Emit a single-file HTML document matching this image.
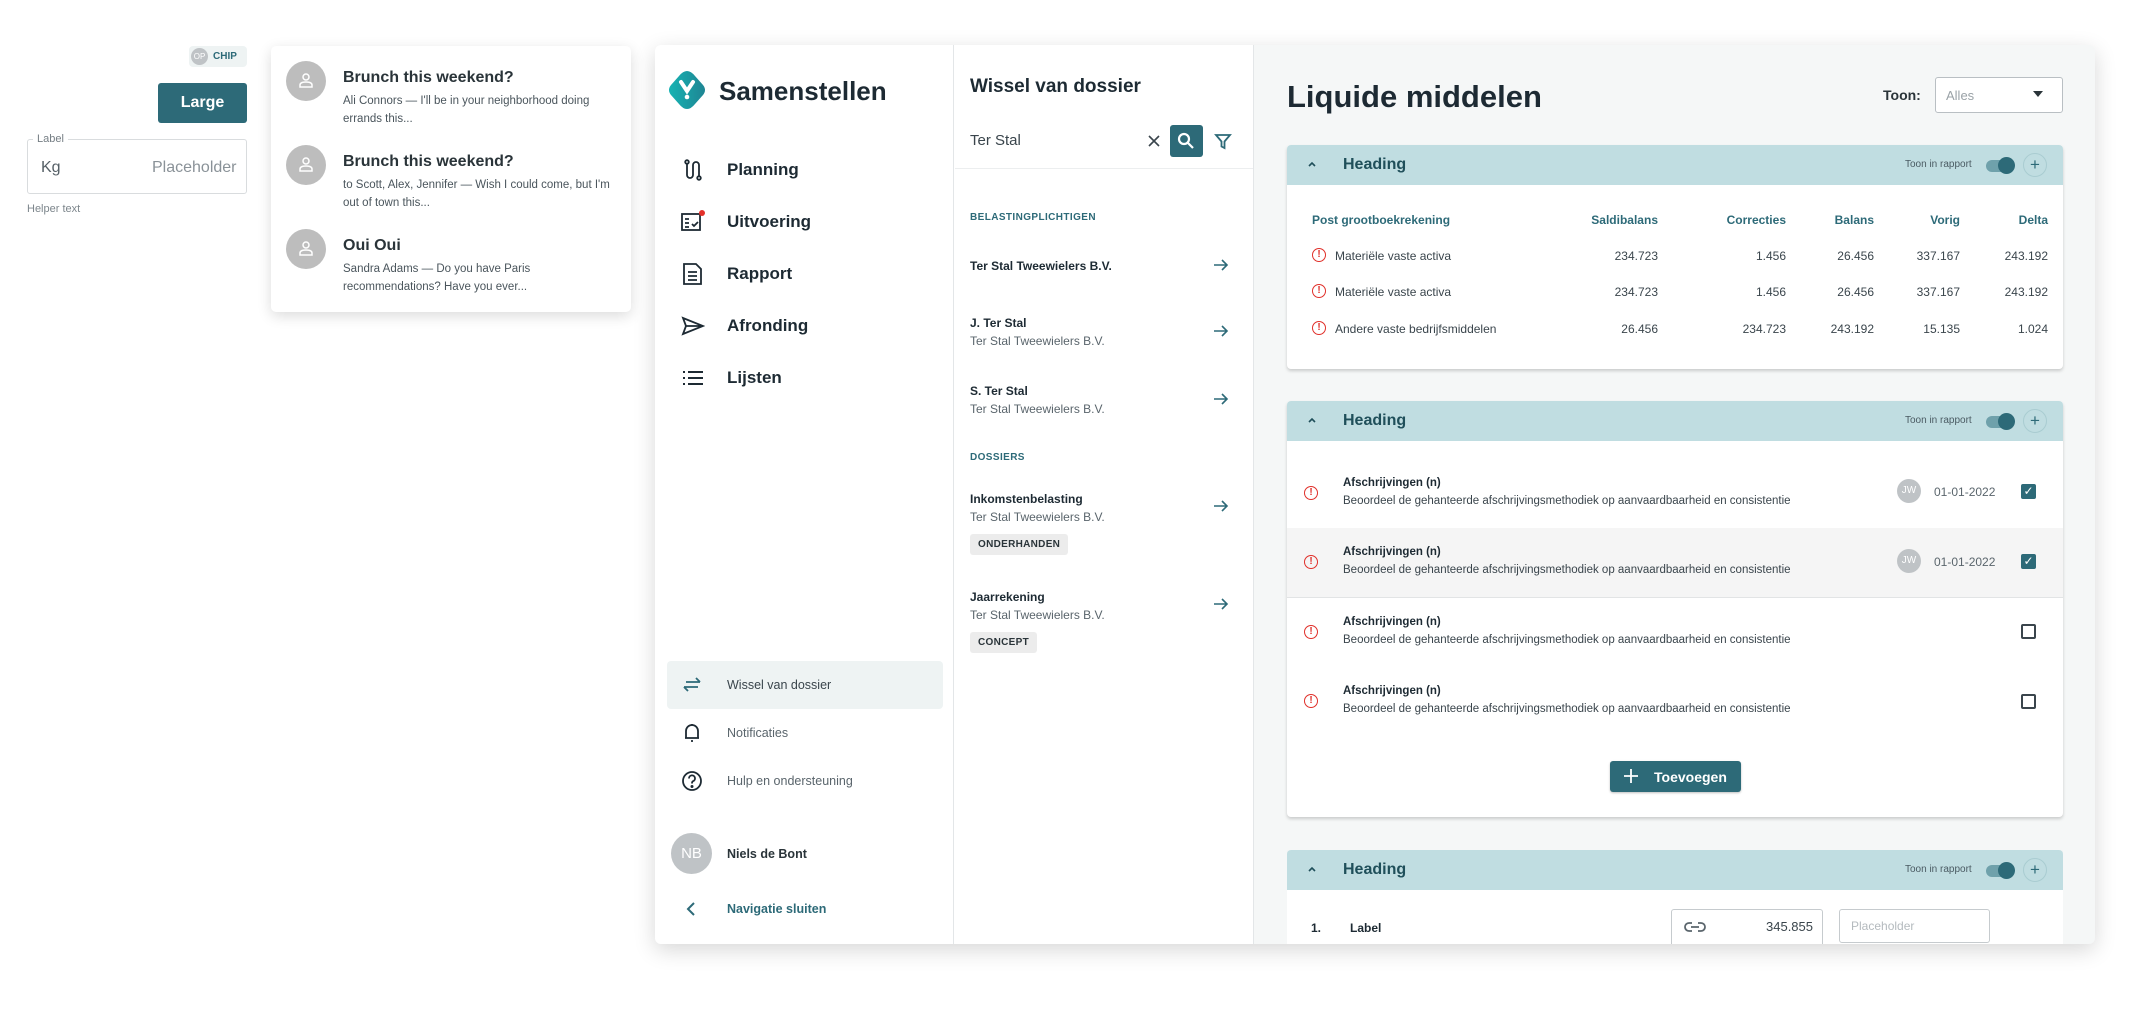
<!DOCTYPE html>
<html><head><meta charset="utf-8"><style>
*{box-sizing:border-box;margin:0;padding:0}
body{width:2149px;height:1010px;background:#fff;font-family:"Liberation Sans",sans-serif;color:#1d2a33;position:relative;overflow:hidden}
.a{position:absolute}
.t{position:absolute;white-space:nowrap}
.card{background:#fff;border-radius:4px;box-shadow:0 2px 3px rgba(0,0,0,.18)}
.hd{position:absolute;left:0;right:0;top:0;height:40px;background:#c0dde1;border-radius:4px 4px 0 0}
.hd .h{position:absolute;left:56px;top:11px;font-size:16px;font-weight:bold;color:#1f4f5a}
.hd svg{position:absolute;left:19px;top:15px}
.hd .tr{position:absolute;left:618px;top:14px;font-size:10px;color:#4a5a62}
.hd .trk{position:absolute;left:699px;top:15px;width:24px;height:12px;border-radius:6px;background:#6fa1ab}
.hd .knb{position:absolute;left:711px;top:12px;width:17px;height:17px;border-radius:50%;background:#2d6a78}
.hd .pl{position:absolute;left:736px;top:8px;width:24px;height:24px;border-radius:50%;border:1px solid #a9ccd1;color:#2d6a78;font-size:17px;text-align:center;line-height:21px}
.th{font-size:12px;color:#2d6a78;font-weight:bold}
.td{font-size:12px;color:#3a454c}
.err{position:absolute;width:14px;height:14px;border:1.5px solid #e0302a;border-radius:50%;color:#e0302a;font-size:10px;font-weight:bold;text-align:center;line-height:11px}
.nav{font-size:17px;font-weight:bold;color:#1d2a33}
.it1{font-size:12px;font-weight:bold;color:#1d2a33}
.it2{font-size:12px;color:#5a656c}
.arr{position:absolute;left:1213px}
.chipg{position:absolute;background:#ececec;border-radius:3px;font-size:10px;font-weight:bold;color:#2a3439;padding:0 8px;line-height:21px;letter-spacing:.3px}
.cb{position:absolute;left:2021px;width:15px;height:15px;border:2px solid #3a454c;border-radius:2px}
.cbo{background:#2d6a78;border-color:#2d6a78;color:#fff;font-size:12px;line-height:11px;text-align:center}
</style></head><body>

<div class="a" style="left:189px;top:46px;width:58px;height:21px;background:#eef3f3;border-radius:4px"></div>
<div class="a" style="left:191px;top:48px;width:17px;height:17px;border-radius:50%;background:#bfc3c6;color:#fff;font-size:8px;text-align:center;line-height:17px">OP</div>
<div class="t" style="left:213px;top:51px;font-size:10px;font-weight:bold;color:#2d6a78">CHIP</div>
<div class="a" style="left:158px;top:83px;width:89px;height:40px;background:#2d6a78;border-radius:3px;color:#fff;font-size:16px;font-weight:bold;text-align:center;line-height:40px">Large</div>
<div class="a" style="left:27px;top:139px;width:220px;height:55px;border:1px solid #d9dcde;border-radius:3px"></div>
<div class="t" style="left:33px;top:133px;background:#fff;padding:0 4px;font-size:11px;color:#757e84">Label</div>
<div class="t" style="left:41px;top:159px;font-size:16px;color:#555f66">Kg</div>
<div class="t" style="left:152px;top:159px;font-size:16px;color:#8a9298">Placeholder</div>
<div class="t" style="left:27px;top:203px;font-size:11px;color:#7d868c">Helper text</div>

<div class="a" style="left:271px;top:46px;width:360px;height:266px;background:#fff;border-radius:5px;box-shadow:0 4px 14px rgba(0,0,0,.14)"></div>
<div class="a" style="left:286px;top:61px;width:40px;height:40px;border-radius:50%;background:#bdbdbd"></div>
<div class="a" style="left:286px;top:145px;width:40px;height:40px;border-radius:50%;background:#bdbdbd"></div>
<div class="a" style="left:286px;top:229px;width:40px;height:40px;border-radius:50%;background:#bdbdbd"></div>
<svg class="a" style="left:296px;top:71px" width="20" height="20" viewBox="0 0 20 20"><circle cx="10" cy="6" r="3" fill="none" stroke="#fff" stroke-width="1.5"/><path d="M4 16v-2q0-3 6-3t6 3v2z" fill="none" stroke="#fff" stroke-width="1.5"/></svg>
<svg class="a" style="left:296px;top:155px" width="20" height="20" viewBox="0 0 20 20"><circle cx="10" cy="6" r="3" fill="none" stroke="#fff" stroke-width="1.5"/><path d="M4 16v-2q0-3 6-3t6 3v2z" fill="none" stroke="#fff" stroke-width="1.5"/></svg>
<svg class="a" style="left:296px;top:239px" width="20" height="20" viewBox="0 0 20 20"><circle cx="10" cy="6" r="3" fill="none" stroke="#fff" stroke-width="1.5"/><path d="M4 16v-2q0-3 6-3t6 3v2z" fill="none" stroke="#fff" stroke-width="1.5"/></svg>
<div class="t" style="left:343px;top:69px;font-size:16px;font-weight:bold;color:#2a3439">Brunch this weekend?</div>
<div class="t" style="left:343px;top:92px;font-size:11.5px;line-height:18px;color:#4a555c;white-space:normal;width:255px">Ali Connors — I'll be in your neighborhood doing errands this...</div>
<div class="t" style="left:343px;top:153px;font-size:16px;font-weight:bold;color:#2a3439">Brunch this weekend?</div>
<div class="t" style="left:343px;top:176px;font-size:11.5px;line-height:18px;color:#4a555c;white-space:normal;width:280px">to Scott, Alex, Jennifer — Wish I could come, but I'm out of town this...</div>
<div class="t" style="left:343px;top:237px;font-size:16px;font-weight:bold;color:#2a3439">Oui Oui</div>
<div class="t" style="left:343px;top:260px;font-size:11.5px;line-height:18px;color:#4a555c;white-space:normal;width:245px">Sandra Adams — Do you have Paris recommendations? Have you ever...</div>

<div class="a" style="left:655px;top:45px;width:1440px;height:899px;background:#f5f7f7;border-radius:6px;box-shadow:0 6px 22px rgba(0,0,0,.16);overflow:hidden">
  <div class="a" style="left:0;top:0;width:299px;height:899px;background:#fff;border-right:1px solid #e3e6e8"></div>
  <div class="a" style="left:299px;top:0;width:300px;height:899px;background:#fff;border-right:1px solid #e3e6e8"></div>
</div>

<svg class="a" style="left:666px;top:69px" width="42" height="42" viewBox="0 0 42 42"><defs><linearGradient id="g" x1="0" x2="1"><stop offset="0" stop-color="#17b3b3"/><stop offset="1" stop-color="#1e8593"/></linearGradient></defs><path d="M21 2Q25 2 29 7L37 16Q41 21 37 26L29 35Q25 40 21 40Q17 40 13 35L5 26Q1 21 5 16L13 7Q17 2 21 2Z" fill="url(#g)"/><path d="M15 13L21 22L27 13" fill="none" stroke="#fff" stroke-width="4" stroke-linecap="round"/><circle cx="21" cy="28" r="2.3" fill="#fff"/></svg>
<div class="t" style="left:719px;top:76px;font-size:26px;font-weight:bold;color:#1d2a33">Samenstellen</div>

<svg class="a" style="left:681px;top:158px" width="24" height="24" viewBox="0 0 24 24" fill="none" stroke="#1d2a33" stroke-width="1.8"><circle cx="6" cy="4" r="1.8"/><path d="M6 6v11a3 3 0 0 0 6 0V7a3 3 0 0 1 6 0v11"/><circle cx="18" cy="20" r="1.8"/></svg>
<div class="t nav" style="left:727px;top:160px">Planning</div>
<svg class="a" style="left:681px;top:210px" width="26" height="24" viewBox="0 0 26 24" fill="none" stroke="#1d2a33" stroke-width="1.8"><rect x="1" y="4" width="18" height="16"/><path d="M4 9h4M4 13h4M4 17h4M11 14l2 2 4-4"/><circle cx="21" cy="3" r="3" fill="#e3302a" stroke="none"/></svg>
<div class="t nav" style="left:727px;top:212px">Uitvoering</div>
<svg class="a" style="left:681px;top:262px" width="24" height="24" viewBox="0 0 24 24" fill="none" stroke="#1d2a33" stroke-width="1.8"><path d="M3 2h12l5 5v15H3z"/><path d="M7 10h9M7 14h9M7 18h9"/></svg>
<div class="t nav" style="left:727px;top:264px">Rapport</div>
<svg class="a" style="left:681px;top:314px" width="24" height="24" viewBox="0 0 24 24" fill="none" stroke="#1d2a33" stroke-width="1.8"><path d="M2 4l20 8-20 8 3-8z M5 12h17"/></svg>
<div class="t nav" style="left:727px;top:316px">Afronding</div>
<svg class="a" style="left:681px;top:366px" width="24" height="24" viewBox="0 0 24 24" fill="none" stroke="#1d2a33" stroke-width="2"><path d="M2 6h2M2 12h2M2 18h2M7 6h15M7 12h15M7 18h15"/></svg>
<div class="t nav" style="left:727px;top:368px">Lijsten</div>

<div class="a" style="left:667px;top:661px;width:276px;height:48px;background:#eef3f3;border-radius:4px"></div>
<svg class="a" style="left:681px;top:674px" width="22" height="22" viewBox="0 0 22 22" fill="none" stroke="#2d6a78" stroke-width="1.8"><path d="M5 8h14M15 4l4 4M17 13H3M7 17l-4-4"/></svg>
<div class="t" style="left:727px;top:678px;font-size:12.5px;color:#3a454c">Wissel van dossier</div>
<svg class="a" style="left:681px;top:722px" width="22" height="22" viewBox="0 0 22 22" fill="none" stroke="#1d2a33" stroke-width="1.8"><path d="M5 16V9a6 6 0 0 1 12 0v7H4h14M10 19h2M11 2v1"/></svg>
<div class="t" style="left:727px;top:726px;font-size:12.5px;color:#5a656c">Notificaties</div>
<svg class="a" style="left:681px;top:770px" width="22" height="22" viewBox="0 0 22 22" fill="none" stroke="#1d2a33" stroke-width="1.8"><circle cx="11" cy="11" r="9"/><path d="M8 8.5a3 3 0 1 1 4 2.7c-1 .5-1 1-1 2.3"/><circle cx="11" cy="16.5" r=".6" fill="#1d2a33"/></svg>
<div class="t" style="left:727px;top:774px;font-size:12.5px;color:#5a656c">Hulp en ondersteuning</div>
<div class="a" style="left:671px;top:833px;width:41px;height:41px;border-radius:50%;background:#bfc3c6;color:#fff;font-size:15px;text-align:center;line-height:41px">NB</div>
<div class="t" style="left:727px;top:847px;font-size:12.5px;font-weight:bold;color:#2a3439">Niels de Bont</div>
<svg class="a" style="left:685px;top:901px" width="12" height="16" viewBox="0 0 12 16" fill="none" stroke="#2d6a78" stroke-width="2"><path d="M9 2L3 8l6 6"/></svg>
<div class="t" style="left:727px;top:902px;font-size:12.5px;font-weight:bold;color:#2d6a78">Navigatie sluiten</div>

<div class="t" style="left:970px;top:76px;font-size:19px;font-weight:bold;color:#1d2a33">Wissel van dossier</div>
<div class="t" style="left:970px;top:132px;font-size:15px;color:#3a454c">Ter Stal</div>
<svg class="a" style="left:1148px;top:135px" width="12" height="12" viewBox="0 0 12 12" stroke="#3a454c" stroke-width="1.6"><path d="M1 1l10 10M11 1L1 11"/></svg>
<div class="a" style="left:1170px;top:125px;width:33px;height:32px;background:#2d6a78;border-radius:3px"></div>
<svg class="a" style="left:1177px;top:132px" width="18" height="18" viewBox="0 0 18 18" fill="none" stroke="#fff" stroke-width="2.2"><circle cx="7" cy="7" r="5"/><path d="M11 11l5 5"/></svg>
<svg class="a" style="left:1214px;top:132px" width="18" height="18" viewBox="0 0 18 18" fill="none" stroke="#2d6a78" stroke-width="1.8"><path d="M2 3h14l-5.5 6.5V16l-3-1.5V9.5z"/></svg>
<div class="a" style="left:955px;top:168px;width:298px;height:1px;background:#eceeef"></div>
<div class="t" style="left:970px;top:212px;font-size:10px;font-weight:bold;color:#2d6a78;letter-spacing:.4px">BELASTINGPLICHTIGEN</div>
<div class="t it1" style="left:970px;top:259px">Ter Stal Tweewielers B.V.</div>
<div class="t it1" style="left:970px;top:316px">J. Ter Stal</div><div class="t it2" style="left:970px;top:334px">Ter Stal Tweewielers B.V.</div>
<div class="t it1" style="left:970px;top:384px">S. Ter Stal</div><div class="t it2" style="left:970px;top:402px">Ter Stal Tweewielers B.V.</div>
<div class="t" style="left:970px;top:452px;font-size:10px;font-weight:bold;color:#2d6a78;letter-spacing:.4px">DOSSIERS</div>
<div class="t it1" style="left:970px;top:492px">Inkomstenbelasting</div><div class="t it2" style="left:970px;top:510px">Ter Stal Tweewielers B.V.</div>
<div class="chipg" style="left:970px;top:534px">ONDERHANDEN</div>
<div class="t it1" style="left:970px;top:590px">Jaarrekening</div><div class="t it2" style="left:970px;top:608px">Ter Stal Tweewielers B.V.</div>
<div class="chipg" style="left:970px;top:632px">CONCEPT</div>
<svg class="arr" style="top:257px" width="16" height="16" viewBox="0 0 16 16" fill="none" stroke="#2d6a78" stroke-width="1.6"><path d="M1 8h13M9 3l5 5-5 5"/></svg>
<svg class="arr" style="top:323px" width="16" height="16" viewBox="0 0 16 16" fill="none" stroke="#2d6a78" stroke-width="1.6"><path d="M1 8h13M9 3l5 5-5 5"/></svg>
<svg class="arr" style="top:391px" width="16" height="16" viewBox="0 0 16 16" fill="none" stroke="#2d6a78" stroke-width="1.6"><path d="M1 8h13M9 3l5 5-5 5"/></svg>
<svg class="arr" style="top:498px" width="16" height="16" viewBox="0 0 16 16" fill="none" stroke="#2d6a78" stroke-width="1.6"><path d="M1 8h13M9 3l5 5-5 5"/></svg>
<svg class="arr" style="top:596px" width="16" height="16" viewBox="0 0 16 16" fill="none" stroke="#2d6a78" stroke-width="1.6"><path d="M1 8h13M9 3l5 5-5 5"/></svg>

<div class="t" style="left:1287px;top:79px;font-size:31px;font-weight:bold;color:#1d2a33">Liquide middelen</div>
<div class="t" style="left:1883px;top:87px;font-size:14px;font-weight:bold;color:#2a3439">Toon:</div>
<div class="a" style="left:1935px;top:77px;width:128px;height:36px;border:1px solid #b9bfc3;border-radius:3px;background:#fff"></div>
<div class="t" style="left:1946px;top:88px;font-size:13px;color:#9aa2a7">Alles</div>
<svg class="a" style="left:2033px;top:91px" width="10" height="6" viewBox="0 0 10 6"><path d="M0 0h10L5 6z" fill="#2a3439"/></svg>

<div class="a card" style="left:1287px;top:145px;width:776px;height:224px">
  <div class="hd"><svg width="12" height="8" viewBox="0 0 12 8" fill="none" stroke="#1f4f5a" stroke-width="1.6"><path d="M3 6l3-3 3 3"/></svg><span class="h">Heading</span><span class="tr">Toon in rapport</span><div class="trk"></div><div class="knb"></div><div class="pl">+</div></div>
</div>
<div class="t th" style="left:1312px;top:213px">Post grootboekrekening</div>
<div class="t th" style="left:1562px;top:213px;width:96px;text-align:right">Saldibalans</div>
<div class="t th" style="left:1690px;top:213px;width:96px;text-align:right">Correcties</div>
<div class="t th" style="left:1778px;top:213px;width:96px;text-align:right">Balans</div>
<div class="t th" style="left:1864px;top:213px;width:96px;text-align:right">Vorig</div>
<div class="t th" style="left:1952px;top:213px;width:96px;text-align:right">Delta</div>
<div class="err" style="left:1312px;top:248px">!</div><div class="t td" style="left:1335px;top:249px">Materiële vaste activa</div>
<div class="err" style="left:1312px;top:284px">!</div><div class="t td" style="left:1335px;top:285px">Materiële vaste activa</div>
<div class="err" style="left:1312px;top:321px">!</div><div class="t td" style="left:1335px;top:322px">Andere vaste bedrijfsmiddelen</div>
<div class="t td" style="left:1562px;top:249px;width:96px;text-align:right">234.723</div><div class="t td" style="left:1690px;top:249px;width:96px;text-align:right">1.456</div><div class="t td" style="left:1778px;top:249px;width:96px;text-align:right">26.456</div><div class="t td" style="left:1864px;top:249px;width:96px;text-align:right">337.167</div><div class="t td" style="left:1952px;top:249px;width:96px;text-align:right">243.192</div>
<div class="t td" style="left:1562px;top:285px;width:96px;text-align:right">234.723</div><div class="t td" style="left:1690px;top:285px;width:96px;text-align:right">1.456</div><div class="t td" style="left:1778px;top:285px;width:96px;text-align:right">26.456</div><div class="t td" style="left:1864px;top:285px;width:96px;text-align:right">337.167</div><div class="t td" style="left:1952px;top:285px;width:96px;text-align:right">243.192</div>
<div class="t td" style="left:1562px;top:322px;width:96px;text-align:right">26.456</div><div class="t td" style="left:1690px;top:322px;width:96px;text-align:right">234.723</div><div class="t td" style="left:1778px;top:322px;width:96px;text-align:right">243.192</div><div class="t td" style="left:1864px;top:322px;width:96px;text-align:right">15.135</div><div class="t td" style="left:1952px;top:322px;width:96px;text-align:right">1.024</div>

<div class="a card" style="left:1287px;top:401px;width:776px;height:416px">
  <div class="hd"><svg width="12" height="8" viewBox="0 0 12 8" fill="none" stroke="#1f4f5a" stroke-width="1.6"><path d="M3 6l3-3 3 3"/></svg><span class="h">Heading</span><span class="tr">Toon in rapport</span><div class="trk"></div><div class="knb"></div><div class="pl">+</div></div>
</div>
<div class="a" style="left:1287px;top:528px;width:776px;height:70px;background:#f5f5f5;border-bottom:1px solid #e2e4e5"></div>
<div class="err" style="left:1304px;top:486px">!</div><div class="t" style="left:1343px;top:477px;font-size:11.5px;font-weight:bold;color:#1d2a33">Afschrijvingen (n)</div><div class="t td" style="left:1343px;top:495px;font-size:11.5px">Beoordeel de gehanteerde afschrijvingsmethodiek op aanvaardbaarheid en consistentie</div>
<div class="err" style="left:1304px;top:555px">!</div><div class="t" style="left:1343px;top:546px;font-size:11.5px;font-weight:bold;color:#1d2a33">Afschrijvingen (n)</div><div class="t td" style="left:1343px;top:564px;font-size:11.5px">Beoordeel de gehanteerde afschrijvingsmethodiek op aanvaardbaarheid en consistentie</div>
<div class="err" style="left:1304px;top:625px">!</div><div class="t" style="left:1343px;top:616px;font-size:11.5px;font-weight:bold;color:#1d2a33">Afschrijvingen (n)</div><div class="t td" style="left:1343px;top:634px;font-size:11.5px">Beoordeel de gehanteerde afschrijvingsmethodiek op aanvaardbaarheid en consistentie</div>
<div class="err" style="left:1304px;top:694px">!</div><div class="t" style="left:1343px;top:685px;font-size:11.5px;font-weight:bold;color:#1d2a33">Afschrijvingen (n)</div><div class="t td" style="left:1343px;top:703px;font-size:11.5px">Beoordeel de gehanteerde afschrijvingsmethodiek op aanvaardbaarheid en consistentie</div>
<div class="a" style="left:1897px;top:479px;width:24px;height:24px;border-radius:50%;background:#bfc3c6;color:#fff;font-size:10px;text-align:center;line-height:24px">JW</div><div class="t td" style="left:1934px;top:485px;color:#5a656c">01-01-2022</div>
<div class="a" style="left:1897px;top:549px;width:24px;height:24px;border-radius:50%;background:#bfc3c6;color:#fff;font-size:10px;text-align:center;line-height:24px">JW</div><div class="t td" style="left:1934px;top:555px;color:#5a656c">01-01-2022</div>
<div class="cb cbo" style="top:484px">✓</div>
<div class="cb cbo" style="top:554px">✓</div>
<div class="cb" style="top:624px"></div>
<div class="cb" style="top:694px"></div>
<div class="a" style="left:1610px;top:761px;width:131px;height:31px;background:#2d6a78;border-radius:3px;box-shadow:0 1px 2px rgba(0,0,0,.25)"></div>
<svg class="a" style="left:1624px;top:769px" width="14" height="14" viewBox="0 0 14 14" stroke="#fff" stroke-width="1.8"><path d="M7 0v14M0 7h14"/></svg>
<div class="t" style="left:1654px;top:769px;font-size:14px;font-weight:bold;color:#fff">Toevoegen</div>

<div class="a" style="left:1287px;top:850px;width:776px;height:94px;overflow:hidden">
<div class="a card" style="left:0;top:0;width:776px;height:110px">
  <div class="hd"><svg width="12" height="8" viewBox="0 0 12 8" fill="none" stroke="#1f4f5a" stroke-width="1.6"><path d="M3 6l3-3 3 3"/></svg><span class="h">Heading</span><span class="tr">Toon in rapport</span><div class="trk"></div><div class="knb"></div><div class="pl">+</div></div>
</div>
<div class="t" style="left:24px;top:71px;font-size:12px;font-weight:bold">1.</div>
<div class="t" style="left:63px;top:71px;font-size:12px;font-weight:bold">Label</div>
<div class="a" style="left:384px;top:59px;width:152px;height:45px;border:1px solid #c6cbce;border-radius:3px;background:#fff"></div>
<svg class="a" style="left:397px;top:71px" width="22" height="12" viewBox="0 0 22 12" fill="none" stroke="#5a656c" stroke-width="1.8"><path d="M8 2H5a4 4 0 0 0 0 8h3M14 2h3a4 4 0 0 1 0 8h-3M7 6h8"/></svg>
<div class="t" style="left:453px;top:69px;width:73px;text-align:right;font-size:13px;color:#3a454c">345.855</div>
<div class="a" style="left:552px;top:59px;width:151px;height:34px;border:1px solid #c6cbce;border-radius:3px;background:#fff"></div>
<div class="t" style="left:564px;top:69px;font-size:12px;color:#b4babe">Placeholder</div>
</div>
</body></html>
